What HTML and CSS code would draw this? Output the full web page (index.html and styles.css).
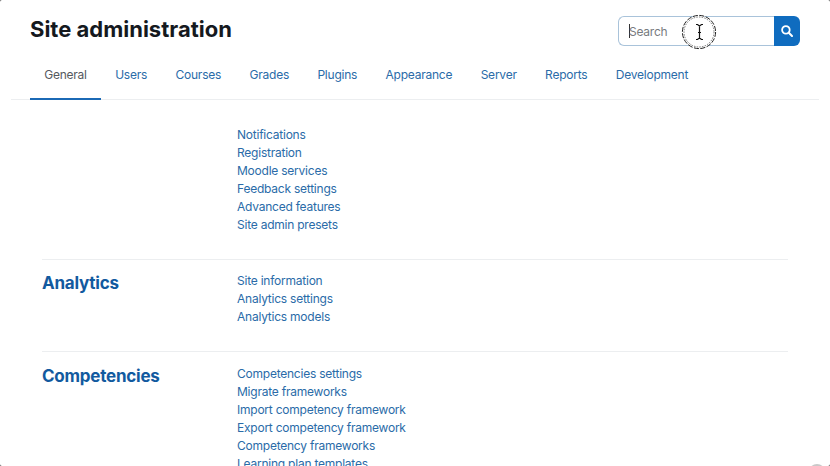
FILE: index.html
```html
<!DOCTYPE html>
<html lang="en">
<head>
<meta charset="utf-8">
<title>Site administration</title>
<link rel="stylesheet" href="styles.css">
</head>
<body>
<div class="window">
  <header class="header">
    <h1 class="title">Site administration</h1>
    <form class="search">
      <div class="field"><span class="caret"></span><span class="placeholder">Search</span></div>
      <div class="submit">
        <svg width="12" height="12" viewBox="0 0 12 12" fill="none" stroke="#fff" stroke-width="1.8" stroke-linecap="round"><circle cx="4.9" cy="4.9" r="3.8"/><path d="M7.8 7.8L11 11" stroke-width="2"/></svg>
      </div>
      <svg class="pointer" width="36" height="36" viewBox="0 0 36 36" fill="none">
        <circle cx="18" cy="18" r="16.5" fill="#fff"/>
        <circle cx="18" cy="18" r="16.6" stroke="#222" stroke-width="1" stroke-dasharray="5 1.5"/>
        <circle cx="18" cy="18" r="15" stroke="#555" stroke-width=".8" stroke-dasharray="1.5 1.2"/>
        <path d="M15 10.5h1.5L18.5 12l2-1.5H22M18.5 12v12M15 25.5h1.5l2-1.5 2 1.5H22M17 18.5h3" stroke="#111" stroke-width="1.2"/>
      </svg>
    </form>
  </header>
  <nav class="tabs">
    <a class="tab active">General</a>
    <a class="tab">Users</a>
    <a class="tab">Courses</a>
    <a class="tab">Grades</a>
    <a class="tab">Plugins</a>
    <a class="tab">Appearance</a>
    <a class="tab">Server</a>
    <a class="tab">Reports</a>
    <a class="tab">Development</a>
  </nav>
  <main class="content">
    <section class="group">
      <h2 class="heading"></h2>
      <ul class="links">
        <li>Notifications</li>
        <li>Registration</li>
        <li>Moodle services</li>
        <li>Feedback settings</li>
        <li>Advanced features</li>
        <li>Site admin presets</li>
      </ul>
    </section>
    <section class="group">
      <h2 class="heading">Analytics</h2>
      <ul class="links">
        <li>Site information</li>
        <li>Analytics settings</li>
        <li>Analytics models</li>
      </ul>
    </section>
    <section class="group">
      <h2 class="heading">Competencies</h2>
      <ul class="links">
        <li>Competencies settings</li>
        <li>Migrate frameworks</li>
        <li>Import competency framework</li>
        <li>Export competency framework</li>
        <li>Competency frameworks</li>
        <li>Learning plan templates</li>
      </ul>
    </section>
  </main>
  <span class="help"></span>
</div>
</body>
</html>
```
FILE: styles.css
```css
* { box-sizing: border-box; }
body { margin: 0; background: #555; font-family: Inter, "Liberation Sans", sans-serif; font-size: 12px; letter-spacing: -.23px; color: #2a6ba8; }
.window { position: relative; height: 466px; overflow: hidden; background: #fff; border-radius: 2px; }
.header { display: flex; justify-content: space-between; align-items: flex-start; height: 56px; padding: 16px 30px 0; }
.title { margin: 0; font-size: 22px; line-height: 26px; font-weight: 700; letter-spacing: 0; color: #15191e; }
.search { position: relative; display: flex; width: 182px; height: 30px; margin: 0; }
.field { display: flex; align-items: center; flex: 1; padding-left: 10px; border: 1px solid #a9c3da; border-right: 0; border-radius: 6px 0 0 6px; color: #777b80; }
.caret { width: 1px; height: 14px; margin-right: -1px; background: #333; }
.submit { display: flex; align-items: center; justify-content: center; width: 26px; background: #0f6cbf; border-radius: 0 6px 6px 0; }
.pointer { position: absolute; left: 63px; top: -2px; }
.tabs { display: flex; height: 44px; margin: 0 11px; padding-left: 19px; border-bottom: 1px solid #eceef0; }
.tab { height: 44px; padding: 0 14.2px; line-height: 38px; white-space: nowrap; }
.active { color: #55595e; border-bottom: 2px solid #1b69b5; }
.content { padding: 0 42px; }
.group { display: grid; grid-template-columns: 195px 1fr; padding: 12px 0 25px; border-top: 1px solid #eceef0; }
.group:first-child { padding-top: 26px; border-top: 0; }
.group:last-child { padding-top: 13px; }
.heading { margin: 0; font-size: 17px; line-height: 22px; font-weight: 700; color: #125a9f; }
.links { margin: 0; padding: 0; list-style: none; line-height: 18px; }
.group:last-child .links { line-height: 17.9px; }
.help { position: absolute; right: 4px; bottom: -17px; width: 18px; height: 19px; border-radius: 50%; background: #c9c9c9; }
```
